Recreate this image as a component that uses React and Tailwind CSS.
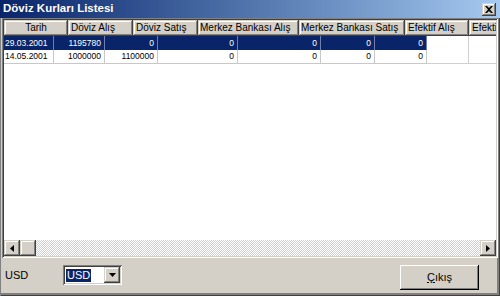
import React from "react";

const raised =
  "shadow-[inset_-1px_-1px_#404040,inset_1px_1px_#d4d0c8,inset_-2px_-2px_#808080,inset_2px_2px_#ffffff]";
const sunken =
  "shadow-[inset_1px_1px_#808080,inset_-1px_-1px_#ffffff,inset_2px_2px_#404040,inset_-2px_-2px_#d4d0c8]";

const headers = [
  { t: "Tarih", w: "w-[64px]", c: "justify-center" },
  { t: "Döviz Alış", w: "w-[65px]", c: "pl-[3px]" },
  { t: "Döviz Satış", w: "w-[65px]", c: "pl-[3px]" },
  { t: "Merkez Bankası Alış", w: "w-[101px]", c: "pl-[2px]" },
  { t: "Merkez Bankası Satış", w: "w-[106px]", c: "pl-[2px]" },
  { t: "Efektif Alış", w: "w-[64px]", c: "pl-[3px]" },
  { t: "Efektif Satış", w: "w-[60px]", c: "pl-[3px]" },
];

const colW = ["w-[50px]", "w-[51px]", "w-[53px]", "w-[80px]", "w-[83px]", "w-[54px]", "w-[52px]"];

const rows = [
  ["29.03.2001", "1195780", "0", "0", "0", "0", "0"],
  ["14.05.2001", "1000000", "1100000", "0", "0", "0", "0"],
];

function Row({ data, sel }) {
  return (
    <div className="flex h-[14px] shrink-0">
      {data.map((v, i) => (
        <div
          key={i}
          className={`${colW[i]} h-full flex items-center text-[8.5px] leading-none ${
            i === 0 ? "justify-start pl-[1px]" : "justify-end pr-[3px]"
          } ${
            sel
              ? "bg-[#0a246a] text-white border-r border-[#6d7fb0]"
              : "bg-white text-black border-r border-b border-[#c8c8c8]"
          }`}
        >
          {v}
        </div>
      ))}
      <div className={`w-[42px] h-full border-r border-[#d0d0d0] ${sel ? "" : "border-b"}`} />
      <div className={`flex-1 h-full ${sel ? "" : "border-b border-[#d0d0d0]"}`} />
    </div>
  );
}

export default function App() {
  return (
    <div className="w-[500px] h-[296px] bg-[#d4d0c8] flex flex-col overflow-hidden font-['Liberation_Sans',Arial,sans-serif] shadow-[inset_1px_0_#808080,inset_-1px_-1px_#404040,inset_-3px_-3px_#808080]">
      {/* title bar */}
      <div className="h-[18px] shrink-0 bg-gradient-to-r from-[#0a246a] to-[#a6caf0] flex items-center justify-between pl-[3px] pr-[4px]">
        <span className="text-white font-bold text-[11.5px] leading-none">Döviz Kurları Listesi</span>
        <div className={`w-[14px] h-[13px] bg-[#d4d0c8] ${raised} flex items-center justify-center`}>
          <svg width="8" height="7" viewBox="0 0 8 7">
            <path d="M0 0 L2 0 L4 2 L6 0 L8 0 L5 3.5 L8 7 L6 7 L4 5 L2 7 L0 7 L3 3.5 Z" fill="#000" />
          </svg>
        </div>
      </div>

      {/* grid */}
      <div className="px-[2px] shrink-0">
        <div className={`h-[240px] p-[2px] ${sunken} flex flex-col`}>
          <div className="flex-1 bg-white flex flex-col overflow-hidden">
            <div className="flex h-[16px] shrink-0">
              {headers.map((h, i) => (
                <div
                  key={i}
                  className={`${h.w} shrink-0 h-full bg-[#d4d0c8] ${raised} flex items-center ${h.c} text-[10px] leading-none text-black whitespace-nowrap overflow-hidden`}
                >
                  {h.t}
                </div>
              ))}
            </div>
            <Row data={rows[0]} sel />
            <Row data={rows[1]} />
          </div>
          {/* horizontal scrollbar */}
          <div className="h-[16px] shrink-0 flex">
            <div className={`w-[16px] h-full bg-[#d4d0c8] ${raised} flex items-center justify-center`}>
              <svg width="4" height="7" viewBox="0 0 4 7">
                <path d="M4 0 L0 3.5 L4 7 Z" fill="#000" />
              </svg>
            </div>
            <div className={`w-[16px] h-full bg-[#d4d0c8] ${raised}`} />
            <div className="flex-1 h-full bg-[repeating-conic-gradient(#d4d0c8_0_25%,#ffffff_0_50%)] bg-[length:2px_2px]" />
            <div className={`w-[16px] h-full bg-[#d4d0c8] ${raised} flex items-center justify-center`}>
              <svg width="4" height="7" viewBox="0 0 4 7">
                <path d="M0 0 L4 3.5 L0 7 Z" fill="#000" />
              </svg>
            </div>
          </div>
        </div>
      </div>

      {/* bottom panel */}
      <div className="flex-1 flex items-start pl-[5px] pr-[21px] pt-[7px]">
        <div className="flex items-center h-[20px]">
          <span className="text-[11px] text-black leading-none w-[58px]">USD</span>
          <div className={`w-[59px] h-[20px] bg-white ${sunken} p-[2px] flex`}>
            <div className="flex-1 flex items-center pl-[1px]">
              <span className="bg-[#0a246a] text-white text-[11px] leading-[13px] px-[1px]">USD</span>
            </div>
            <div className={`w-[16px] h-full bg-[#d4d0c8] ${raised} flex items-center justify-center`}>
              <svg width="7" height="4" viewBox="0 0 7 4">
                <path d="M0 0 L7 0 L3.5 4 Z" fill="#000" />
              </svg>
            </div>
          </div>
        </div>
        <div className="flex-1" />
        <div className={`w-[79px] h-[25px] bg-[#d4d0c8] shadow-[inset_-1px_-1px_#000000,inset_1px_1px_#ffffff,inset_-2px_-2px_#808080,inset_2px_2px_#d4d0c8] flex items-center justify-center text-[11px] text-black`}>
          <span><span className="underline">Ç</span>ıkış</span>
        </div>
      </div>
    </div>
  );
}
